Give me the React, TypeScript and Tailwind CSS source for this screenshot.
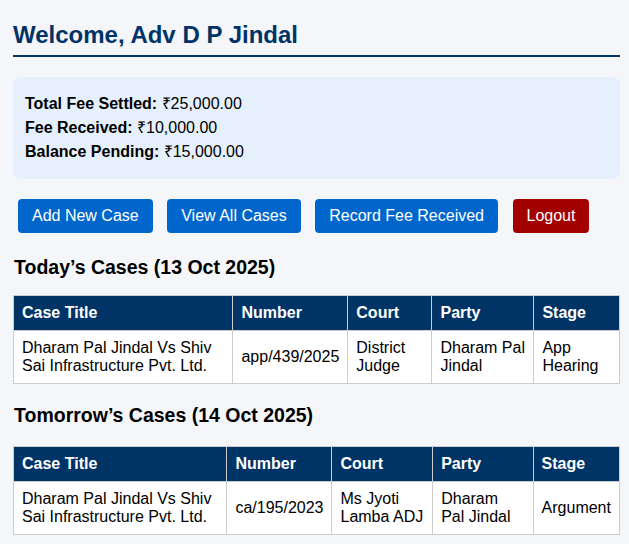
import React from "react";

interface CaseRow {
  title: string;
  number: string;
  court: string;
  party: string;
  stage: string;
}

const todayCases: CaseRow[] = [
  {
    title: "Dharam Pal Jindal Vs Shiv Sai Infrastructure Pvt. Ltd.",
    number: "app/439/2025",
    court: "District Judge",
    party: "Dharam Pal Jindal",
    stage: "App Hearing",
  },
];

const tomorrowCases: CaseRow[] = [
  {
    title: "Dharam Pal Jindal Vs Shiv Sai Infrastructure Pvt. Ltd.",
    number: "ca/195/2023",
    court: "Ms Jyoti Lamba ADJ",
    party: "Dharam Pal Jindal",
    stage: "Argument",
  },
];

const CaseTable = ({ rows }: { rows: CaseRow[] }) => (
  <table className="w-full border-collapse border border-[#ccc] bg-white">
    <thead>
      <tr>
        {["Case Title", "Number", "Court", "Party", "Stage"].map((h) => (
          <th
            key={h}
            className="bg-[#003366] text-white font-bold text-left p-2 border border-[#ccc]"
          >
            {h}
          </th>
        ))}
      </tr>
    </thead>
    <tbody>
      {rows.map((r) => (
        <tr key={r.number}>
          <td className="p-2 border border-[#ccc]">{r.title}</td>
          <td className="p-2 border border-[#ccc]">{r.number}</td>
          <td className="p-2 border border-[#ccc]">{r.court}</td>
          <td className="p-2 border border-[#ccc]">{r.party}</td>
          <td className="p-2 border border-[#ccc]">{r.stage}</td>
        </tr>
      ))}
    </tbody>
  </table>
);

export default function App() {
  const buttons = [
    { label: "Add New Case", color: "bg-[#0066cc]" },
    { label: "View All Cases", color: "bg-[#0066cc]" },
    { label: "Record Fee Received", color: "bg-[#0066cc]" },
    { label: "Logout", color: "bg-[#a30000]" },
  ];

  return (
    <div className="min-h-screen bg-[#f4f6fa] pl-[13px] pr-[9px] pb-4 text-[16px] leading-[normal] text-black font-['Liberation_Sans',Arial,sans-serif]">
      <h2 className="pt-[21px] pb-[6px] border-b-2 border-[#003366] text-[24px] font-bold text-[#003366] leading-[normal]">
        Welcome, Adv D P Jindal
      </h2>

      <div className="mt-[20px] rounded-lg bg-[#e6f0fc] px-[12px] py-[15px] leading-[24px]">
        <div>
          <span className="font-bold">Total Fee Settled:</span> ₹25,000.00
        </div>
        <div>
          <span className="font-bold">Fee Received:</span> ₹10,000.00
        </div>
        <div>
          <span className="font-bold">Balance Pending:</span> ₹15,000.00
        </div>
      </div>

      <div className="mt-[20px] ml-[5px] flex gap-[14.5px]">
        {buttons.map((b) => (
          <button
            key={b.label}
            className={`${b.color} text-white rounded px-[14px] h-[34px] leading-[34px]`}
          >
            {b.label}
          </button>
        ))}
      </div>

      <h3 className="mt-[23px] mb-[16px] ml-px text-[19.5px] font-bold leading-[normal]">
        Today’s Cases (13 Oct 2025)
      </h3>
      <CaseTable rows={todayCases} />

      <h3 className="mt-[20px] mb-[19px] ml-px text-[19.5px] font-bold leading-[normal]">
        Tomorrow’s Cases (14 Oct 2025)
      </h3>
      <CaseTable rows={tomorrowCases} />
    </div>
  );
}
